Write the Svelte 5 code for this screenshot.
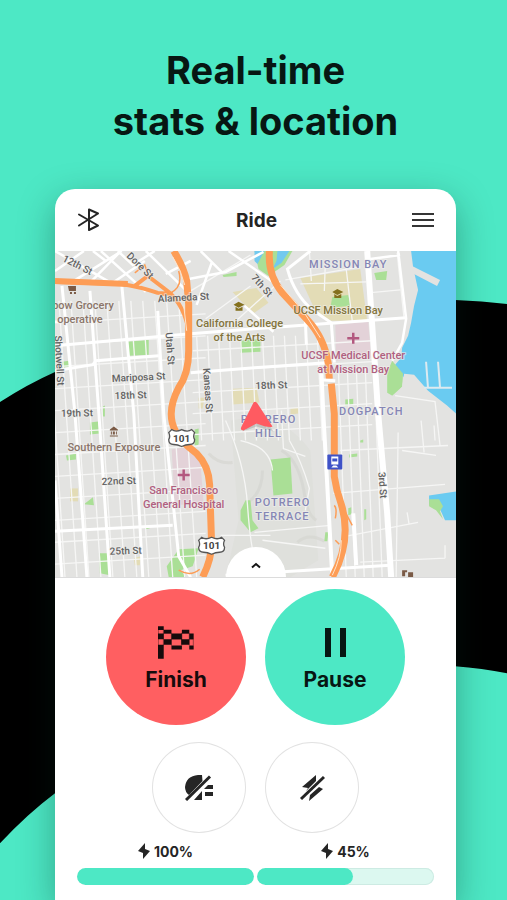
<script>
  const range = (n) => Array.from({ length: n }, (_, i) => i);

  // Residential streets west and east of the hill
  const westStreets = range(13).map((i) => ({ x1: 34 + i * 12, y1: 300, x2: 52 + i * 12, y2: 577 }));
  const eastStreets = range(12).map((i) => ({ x1: 196 + i * 11, y1: 335, x2: 201 + i * 11, y2: 440 }));
  const bayStreets = range(5).map((i) => ({ x1: 338 + i * 9, y1: 366, x2: 346 + i * 9, y2: 577 }));
  const crossStreets = range(12).map((i) => ({ x1: 54, y1: 322 + i * 22, x2: 205, y2: 313 + i * 22 }));
  const eastCross = range(5).map((i) => ({ x1: 192, y1: 350 + i * 21, x2: 372, y2: 340 + i * 21 }));
  const minor = [...westStreets, ...eastStreets, ...bayStreets, ...crossStreets, ...eastCross];

  const parks = [
    '127,341 148,339 148,354 128,355', '240,340 260,338 260,351 240,352', '270,459 290,457 292,493 273,495',
    '89,422 97,421 99,433 89,434', '194,429 198,428 198,444 194,446', '240,510 245,500 250,500 252,520 258,528 250,532 240,520',
    '178,549 198,548 192,566 180,570 185,577 168,577 166,566', '98,553 108,553 109,575 99,573', '65,455 75,453 75,459 66,460',
    '83,504 92,497 93,505', '345,399 353,398 353,404 345,405', '374,272 387,270 386,279 376,279',
    '332,296 348,294 350,305 330,307', '349,454 357,453 357,456 349,457', '61,361 68,360 68,366 61,367',
    '222,274 236,271 236,275 223,276', '348,508 351,507 351,514 348,515', '364,509 366,509 366,519 364,520',
    '102,406 104,405 104,416 102,416', '325,532 328,532 327,541 324,541', '360,440 363,439 363,442 360,442',
    '145,526 148,525 149,528 145,529'
  ];
  const plots = [
    '232,388 256,387 259,402 232,404', '300,277 360,268 367,320 326,320 314,308', '69,488 77,488 77,501 69,501',
    '133,558 140,556 139,565 134,565', '290,408 298,407 298,413 290,414', '232,291 256,287 268,302 254,312 244,304', '198,397 204,397 202,408 198,408'
  ];

  const labels = [
    { t: ['12th St'], x: 75, y: 267, r: 27, c: 'street' },
    { t: ['Dore St'], x: 137, y: 267, r: 44, c: 'street' },
    { t: ['Alameda St'], x: 183, y: 300, r: -3, c: 'street' },
    { t: ['7th St'], x: 259, y: 287, r: 48, c: 'street' },
    { t: ['Utah St'], x: 166, y: 348, r: 86, c: 'street' },
    { t: ['Kansas St'], x: 204, y: 390, r: 86, c: 'street' },
    { t: ['Shotwell St'], x: 55, y: 360, r: 87, c: 'street' },
    { t: ['3rd St'], x: 379, y: 485, r: 86, c: 'street' },
    { t: ['Mariposa St'], x: 138, y: 380, r: -3, c: 'street' },
    { t: ['18th St'], x: 130, y: 398, r: -2, c: 'street' },
    { t: ['19th St'], x: 76, y: 416, r: -1, c: 'street' },
    { t: ['18th St'], x: 271, y: 388, r: -2, c: 'street' },
    { t: ['22nd St'], x: 118, y: 484, r: -2, c: 'street' },
    { t: ['25th St'], x: 125, y: 554, r: -2, c: 'street' },
    { t: ['bow Grocery'], x: 82, y: 308, r: 0, c: 'shop' },
    { t: ['operative'], x: 79, y: 322, r: 0, c: 'shop' },
    { t: ['Southern Exposure'], x: 113, y: 451, r: 0, c: 'shop' },
    { t: ['California College', 'of the Arts'], x: 239, y: 326, r: 0, c: 'school' },
    { t: ['UCSF Mission Bay'], x: 338, y: 313, r: 0, c: 'school' },
    { t: ['UCSF Medical Center', 'at Mission Bay'], x: 353, y: 358, r: 0, c: 'health' },
    { t: ['San Francisco', 'General Hospital'], x: 183, y: 494, r: 0, c: 'health' },
    { t: ['MISSION BAY'], x: 348, y: 267, r: 0, c: 'area' },
    { t: ['DOGPATCH'], x: 371, y: 414, r: 0, c: 'area' },
    { t: ['POTRERO', 'HILL'], x: 268, y: 422, r: 0, c: 'area' },
    { t: ['POTRERO', 'TERRACE'], x: 282, y: 506, r: 0, c: 'area' }
  ];

  const shields = [{ x: 181, y: 437 }, { x: 211, y: 545 }];
  const batteries = [{ name: 'Battery 1', level: 100 }, { name: 'Battery 2', level: 45 }];
</script>

<main>
  <svg class="backdrop" viewBox="0 0 507 900" preserveAspectRatio="none" aria-hidden="true">
    <path d="M0 402Q28 384 55 372Q280 292 455 300Q482 301 507 304V673Q482 668 455 666Q250 650 55 793Q27 814 0 843Z" />
  </svg>

  <h1>Real-time<br />stats &amp; location</h1>

  <section class="phone">
    <header>
      <button class="plain" aria-label="Bluetooth">
        <svg width="24" height="26" viewBox="0 0 24 26" fill="none" stroke="#252525" stroke-width="2" stroke-linejoin="round" stroke-linecap="round">
          <path d="M2 7.500L21 18.500L12 23V2.500L21 6.500L2 18.500" />
        </svg>
      </button>
      <h2>Ride</h2>
      <button class="plain" aria-label="Menu">
        <svg width="22" height="16" viewBox="0 0 22 16" stroke="#353535" stroke-width="2"><path d="M0 2H22M0 8H22M0 14H22" /></svg>
      </button>
    </header>

    <div class="map">
      <svg viewBox="54 250 402 327" role="img" aria-label="Map of Potrero Hill">
        <rect x="54" y="250" width="402" height="327" fill="#e3e3e1" />
        <path d="M230 420Q280 408 310 450L318 560L290 577H225L238 520Z" fill="#dfe0dc" />
        <g fill="none" stroke="#d3d4cf" stroke-width="3" opacity=".6">
          <path d="M281 450Q300 460 305 500Q308 515 316 520M297 542Q308 532 324 541" />
          <path d="M208 453Q218 464 232 462M262 470Q262 490 250 500" />
        </g>
        {#each plots as p}<polygon points={p} fill="#e3dcb6" />{/each}
        <path d="M335 324L368 321L371 357L336 360ZM171 449L189 446L200 464L203 503L174 505Z" fill="#e3d2d8" />
        {#each parks as p}<polygon points={p} fill="#aadf96" />{/each}
        <path d="M254 250H292L284 264L268 275L258 268Z" fill="#aadf96" />
        <path d="M260 250H264L257 263L254 260V250ZM277 250H289L281 262L272 268L276 260Z" fill="#72c9ef" />

        <path d="M411 250L413 266L418 289L414 305L411 322L408 335L402 347L401 357L395 364L404 377L414 376L427 393L447 407L456 416V250Z" fill="#6acbf1" />
        <path d="M392 360L403 373L402 386L394 396L387 392V372Z" fill="#aadf96" />
        <path d="M404 373L414 374L428 390L447 405L456 413V440H392V395L402 386Z" fill="#e3e3e1" />
        <path d="M412 265L440 279L437 285L410 271Z" fill="#e3e3e1" />
        <path d="M426 361L428 388M438 361L440 387M424 387H452" stroke="#dceaf0" stroke-width="2" fill="none" />
        <path d="M429 495L456 491V520H445L440 509L429 504Z" fill="#6acbf1" />
        <path d="M429 499L439 499L443 506L440 511L443 519L436 510L429 506Z" fill="#aadf96" />

        <g stroke="#f6f6f5" stroke-width="1.300" fill="none">
          {#each minor as s}<line x1={s.x1} y1={s.y1} x2={s.x2} y2={s.y2} />{/each}
          <path d="M190 290L250 254M205 318L250 285M230 325L280 280M285 279L360 266M300 283L366 281M309 250L311 280M325 262L324 290M345 260L352 320M368 292L400 289M397 252L404 318" />
          <path d="M340 450L448 445M333 493L445 484M345 536L418 522M360 562L445 558M398 432L396 577M407 512L409 524M421 420L424 452M434 425L435 440M445 545V558M402 450L436 455M395 395L435 401L440 445" />
          <path d="M225 420Q244 462 247 505T255 560M240 440Q270 446 272 470M281 410L283 448L305 456M289 440Q301 460 309 488L305 510M254 532L330 525M262 540L325 548M220 535H270" />
        </g>
        <g stroke="#fff" stroke-width="2.500" fill="none">
          <path d="M54 270L83 250M54 250L112 283M68 283L121 250M100 250L145 291M117 250L132 264L154 250M145 250L188 292M110 283L144 260M188 278L225 271L263 251M200 250L222 272M228 250L274 282M211 262L196 304" />
          <path d="M120 250L88 283M92 250L105 260M165 273L190 260M54 321H74M244 305L273 331M398 250L406 318L402 342L392 360M370 258L400 254" />
        </g>
        <g stroke="#fff" stroke-width="3" fill="none">
          <path d="M61 285L74 413L86 577M89 290L98 413L109 577M121 285L133 413L142 577M157 310L163 413L178 556L190 577M54 480L61 577" />
          <path d="M54 345L190 333L254 328L406 317M54 370L92 364L95 360L158 355M190 372L254 367L326 362M54 531L172 525M225 575L390 565" />
          <path d="M310 250L287 268Q294 294 312 309L331 322L334 362M305 320L306 344" />
        </g>
        <path d="M321 370L323 413L332 577M353 513L356 565" stroke="#fff" stroke-width="4" fill="none" />
        <path d="M367 250L371 310L378 413L387 513L391 577" stroke="#fff" stroke-width="6" fill="none" />

        <g fill="none" stroke="#fd9d56">
          <path d="M54 281L121 283Q140 286 157 292L172 293M134 285L147 275L164 288Q181 300 187 325" stroke-width="4" />
          <path d="M54 280L127 283" stroke-width="6" />
          <path d="M134 272L144 264L148 276M160 295Q184 291 178 270M335 518Q337 508 334 505M335 540L339 544M344 510L352 525M178 570Q190 577 199 569" stroke-width="1.500" />
          <path d="M173 250Q183 266 186 280L188 303V350Q188 373 178 387C168 406 169 420 175 431Q179 440 196 453Q208 465 209 484L211 543Q211 559 202 577" stroke-width="7" />
          <path d="M269 250Q267 274 282 292L307 319Q324 337 328 363L329 378M331 383L334 413V476Q336 490 341 504Q352 540 332 577" stroke-width="7" />
        </g>
        <path d="M172 256Q181 270 184 284M280 284L304 312L320 337M341 540Q341 557 332 575M183 304L186 330" fill="none" stroke="#ffe5cc" stroke-width="1" />
        <path d="M320 379L335 380" stroke="#fff" stroke-width="3" />

        {#each labels as l}
          <text class={l.c} transform="translate({l.x} {l.y}) rotate({l.r})">
            {#each l.t as line, i}<tspan x="0" y={i * 14}>{line}</tspan>{/each}
          </text>
        {/each}

        <path d="M353 332V343M347 337.500H359M183 469V480M177 474.500H189" stroke="#b3587f" stroke-width="2.500" />
        <g fill="#84701d">
          <path d="M233 304L238 301L244 304L238 307ZM235 306L238 308L242 306V310H235ZM332 291L337 288L343 291L337 294ZM334 293L337 295L341 293V297H334Z" />
        </g>
        <g fill="#7a5a45">
          <path d="M67 285H75V290H68ZM69 291H71V293H69ZM73 291H75V293H73ZM109 429L113 426L117 429V430H109ZM110 431H111V434H110ZM112 431H114V434H112ZM115 431H116V434H115ZM109 435H117V436H109ZM402 570H407V572H405V576H402ZM408 572H413V577H408Z" />
        </g>

        {#each shields as s}
          <g transform="translate({s.x} {s.y})">
            <path d="M-10 -8Q-6 -5 0 -8Q6 -5 10 -8L13 -5Q11 -1 13 2Q13 7 8 7Q4 7 0 9Q-4 7 -8 7Q-13 7 -13 2Q-11 -1 -13 -5Z" fill="#fff" stroke="#555" stroke-width="1.300" />
            <text class="shield" y="4">101</text>
          </g>
        {/each}
        <rect x="327" y="454" width="15" height="15" rx="1" fill="#3f52c7" />
        <path d="M331 456H338V464H331ZM331 467L333 465H336L338 467" fill="#fff" />
        <path d="M332 458H337V461H332Z" fill="#3f52c7" />

        <path d="M256 406L273 431L256 426L242 431Z" fill="#555" opacity=".22" />
        <path d="M253 402Q255 400 257 403L272 426Q269 428 256 423L243 430Q239 430 241 426Z" fill="#ff5b61" />
      </svg>
      <button class="pull" aria-label="Expand stats">
        <svg width="10" height="7" viewBox="0 0 10 7" fill="none" stroke="#151515" stroke-width="2"><path d="M1 5.500L5 2L9 5.500" /></svg>
      </button>
    </div>

    <div class="controls">
      <div class="row">
        <button class="big finish">
          <svg width="36" height="33" viewBox="174 121 107 98" aria-hidden="true">
            <path fill="#160b0c" d="M174 122H191V133H174ZM191 132H214V143H191ZM174 143H191V160H174ZM245 132H267V143H245ZM214 143H245V160H214ZM267 143H280V160H267ZM191 160H214V177H191ZM174 177H191V218H174ZM243 160H267V177H243ZM214 179H245V191H214ZM267 179H280V191H267Z" />
            <path fill="none" stroke="#160b0c" stroke-width="2" opacity=".6" d="M175 133V178M190 133V178M191 143H214V179M214 160H245V143M243 143H267V179M245 160V179M267 160H279V179" />
          </svg>
          <span>Finish</span>
        </button>
        <button class="big pause">
          <svg width="36" height="33" viewBox="0 0 36 33" aria-hidden="true"><path fill="#071713" d="M8 2H14V31H8ZM23 2H29V31H23Z" /></svg>
          <span>Pause</span>
        </button>
      </div>

      <div class="row">
        <button class="small" aria-label="Lights off">
          <svg width="28" height="26" viewBox="0 0 28 26" fill="#252525">
            <path d="M17 0L17.500 6L4 20Q0 17 0 12Q1 1 13 0ZM17 16V25H9ZM23 10H28V14H19ZM20 17H28V21H20Z" />
            <path d="M1 25L25 1.500" stroke="#252525" stroke-width="3" />
          </svg>
        </button>
        <button class="small" aria-label="Boost off">
          <svg width="26" height="26" viewBox="0 0 26 26" fill="#252525">
            <path d="M17 0L17 6L7 16L9 13L3 12ZM20 12L24 14L10 26L11 20Z" />
            <path d="M2 24L25 2" stroke="#252525" stroke-width="3" />
          </svg>
        </button>
      </div>

      <div class="batteries">
        {#each batteries as b}
          <div class="battery">
            <div class="level">
              <svg width="12" height="16" viewBox="0 0 12 16" fill="#252525" aria-hidden="true"><path d="M7 0L0 8L5 10V16L12 8L7 6Z" /></svg>
              <span>{b.level}%</span>
            </div>
            <div class="track" role="meter" aria-label={b.name} aria-valuemin="0" aria-valuemax="100" aria-valuenow={b.level}>
              <div class="fill" style="width: {b.level === 100 ? 100 : b.level + 9}%"></div>
            </div>
          </div>
        {/each}
      </div>
    </div>
  </section>
</main>

<style>
  :global(body) {
    margin: 0;
    background: #4de8c5;
  }
  main {
    position: relative;
    box-sizing: border-box;
    min-height: 100vh;
    padding: 45px 51px 0 55px;
    display: flex;
    flex-direction: column;
    overflow: hidden;
    background: #4de8c5;
    font-family: Inter, "Liberation Sans", sans-serif;
    color: #252525;
  }
  .backdrop {
    position: absolute;
    inset: 0;
    width: 100%;
    height: 100%;
  }
  h1 {
    position: relative;
    margin: 0 0 42px;
    font-size: 38px;
    line-height: 51px;
    font-weight: 700;
    text-align: center;
    color: #071713;
  }
  .phone {
    position: relative;
    flex: 1;
    background: #fff;
    border-radius: 20px 20px 0 0;
    box-shadow: 0 12px 36px rgba(0, 40, 30, 0.35);
  }
  header {
    display: flex;
    align-items: center;
    justify-content: space-between;
    height: 62px;
    padding: 0 22px;
  }
  h2 {
    margin: 0;
    font-size: 19px;
    font-weight: 700;
  }
  button {
    display: flex;
    align-items: center;
    justify-content: center;
    padding: 0;
    border: 0;
    font: inherit;
    color: inherit;
    cursor: pointer;
  }
  .plain {
    background: none;
  }
  .map {
    position: relative;
    overflow: hidden;
    border-bottom: 1px solid #dcdcdc;
  }
  .map > svg {
    display: block;
    width: 100%;
  }
  .map text {
    font-family: Roboto, sans-serif;
    font-size: 11px;
    font-weight: 500;
    text-anchor: middle;
    paint-order: stroke;
    stroke: rgba(240, 240, 238, 0.6);
    stroke-width: 2px;
    stroke-linejoin: round;
  }
  .map .street {
    fill: #626262;
    font-size: 10px;
  }
  .map .shop {
    fill: #8a756a;
  }
  .map .school {
    fill: #83743c;
  }
  .map .health {
    fill: #b06080;
  }
  .map .area {
    fill: #8586b5;
    letter-spacing: 1px;
  }
  .map .shield {
    fill: #444;
    font-size: 10px;
    font-weight: 700;
    stroke: none;
  }
  .pull {
    position: absolute;
    left: 50%;
    bottom: 0;
    width: 60px;
    height: 30px;
    margin-left: -30px;
    padding-top: 6px;
    border-radius: 30px 30px 0 0;
    background: #fff;
  }
  .controls {
    display: flex;
    flex-direction: column;
    gap: 17px;
    padding: 11px 22px 15px;
  }
  .row {
    display: flex;
    justify-content: center;
    gap: 19px;
  }
  .big {
    flex-direction: column;
    gap: 8px;
    width: 140px;
    height: 136px;
    padding-top: 4px;
    border-radius: 50%;
    font-size: 21px;
    line-height: 26px;
    font-weight: 700;
    color: #160b0c;
  }
  .finish {
    background: #ff5f61;
  }
  .pause {
    background: #4de8c5;
    color: #071713;
  }
  .small {
    box-sizing: border-box;
    width: 94px;
    height: 91px;
    border: 1px solid #e2e2e2;
    border-radius: 50%;
    background: #fff;
  }
  .batteries {
    display: flex;
    gap: 3px;
    margin-top: -9px;
  }
  .battery {
    flex: 1;
  }
  .level {
    display: flex;
    align-items: center;
    justify-content: center;
    gap: 4px;
    height: 20px;
    margin-bottom: 7px;
    font-size: 14px;
    font-weight: 700;
  }
  .track {
    height: 17px;
    border-radius: 9px;
    overflow: hidden;
    background: #dcf8f0;
    box-shadow: inset 0 0 0 1px #cdebe3;
  }
  .fill {
    height: 100%;
    border-radius: 9px;
    background: #4de8c5;
  }
</style>
